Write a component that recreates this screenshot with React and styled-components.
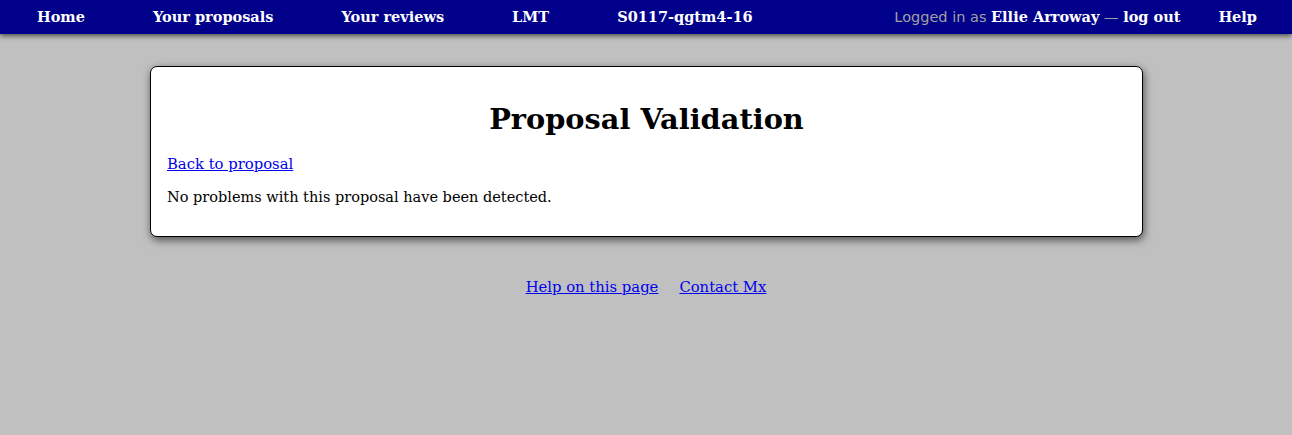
import React from 'react';
import styled, { createGlobalStyle } from 'styled-components';

const GlobalStyle = createGlobalStyle`
    html, body {
        margin: 0;
        padding: 0;
        background: #c0c0c0;
        font-family: "DejaVu Serif", serif;
        font-size: 14.5px;
    }
`;

const NavBar = styled.nav`
    box-sizing: border-box;
    display: flex;
    align-items: center;
    justify-content: space-between;
    height: 34px;
    padding: 0 35px 2px 37px;
    background: #00008b;
    box-shadow: 0 2px 5px rgba(0, 0, 0, 0.6);
    color: #ffffff;
    font-weight: bold;
`;

const NavGroup = styled.div`
    display: flex;
    align-items: center;
    gap: ${(props) => props.gap || 68}px;
`;

const NavLink = styled.a`
    color: #ffffff;
    font-weight: bold;
    text-decoration: none;
`;

const LoginInfo = styled.span`
    color: #a0a0a0;
    font-weight: normal;

    i {
        font-style: normal;
        font-family: "DejaVu Sans", sans-serif;
    }

    b {
        color: #ffffff;
        font-weight: bold;
    }
`;

const Card = styled.section`
    margin: 32px 149px 0 150px;
    padding: 22px 16px 31px;
    background: #ffffff;
    border: 1px solid #000000;
    border-radius: 7px;
    box-shadow: 1px 3px 8px rgba(0, 0, 0, 0.6);
`;

const Title = styled.h1`
    margin: 13px 0 19px;
    text-align: center;
    font-size: 28.8px;
`;

const Paragraph = styled.p`
    margin: 0 0 17px;
    &:last-child {
        margin-bottom: 0;
    }
`;

const Link = styled.a`
    color: #0000ee;
    font-size: 14.8px;
    text-decoration: underline;
`;

const Footer = styled.footer`
    display: flex;
    justify-content: center;
    gap: 21px;
    margin-top: 41px;
`;

const App = () => {
    return (
        <>
            <GlobalStyle />
            <NavBar>
                <NavGroup>
                    <NavLink href="#">Home</NavLink>
                    <NavLink href="#">Your proposals</NavLink>
                    <NavLink href="#">Your reviews</NavLink>
                    <NavLink href="#">LMT</NavLink>
                    <NavLink href="#">S0117-qgtm4-16</NavLink>
                </NavGroup>
                <NavGroup gap={38}>
                    <LoginInfo>
                        <i>Logged in as</i> <b>Ellie Arroway</b> — <NavLink href="#">log out</NavLink>
                    </LoginInfo>
                    <NavLink href="#">Help</NavLink>
                </NavGroup>
            </NavBar>
            <Card>
                <Title>Proposal Validation</Title>
                <Paragraph>
                    <Link href="#">Back to proposal</Link>
                </Paragraph>
                <Paragraph>No problems with this proposal have been detected.</Paragraph>
            </Card>
            <Footer>
                <Link href="#">Help on this page</Link>
                <Link href="#">Contact Mx</Link>
            </Footer>
        </>
    );
};

export default App;
